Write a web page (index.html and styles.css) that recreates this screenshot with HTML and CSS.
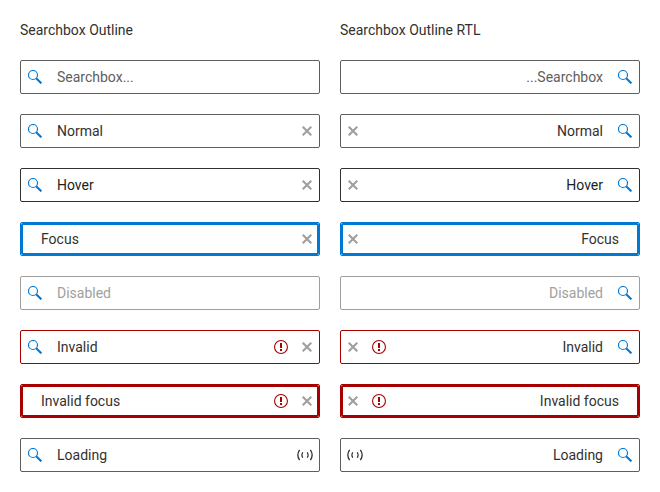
FILE: index.html
```
<!DOCTYPE html>
<html lang="en">
<head>
<meta charset="utf-8">
<title>Searchbox Outline</title>
<link rel="stylesheet" href="styles.css">
</head>
<body>
<svg class="defs" aria-hidden="true">
  <symbol id="search" viewBox="0 0 14 14"><circle cx="5" cy="5" r="4.5" fill="none" stroke="currentColor" stroke-width="1.15"/><path d="M8.2 8.2 13.4 13.4" fill="none" stroke="currentColor" stroke-width="2.1"/></symbol>
  <symbol id="clear" viewBox="0 0 10 10"><path d="M.7.7 9.3 9.3M9.3.7.7 9.3" fill="none" stroke="currentColor" stroke-width="2.1"/></symbol>
  <symbol id="error" viewBox="0 0 14 14"><circle cx="7" cy="7" r="6.45" fill="none" stroke="currentColor" stroke-width="1.1"/><path d="M6 3h2v5H6zM6 9h2v2H6z" fill="currentColor"/></symbol>
  <symbol id="loading" viewBox="0 0 16 12"><path d="M2.6.8Q-.9 6 2.6 11.2M13.4.8Q16.9 6 13.4 11.2" fill="none" stroke="currentColor" stroke-width="1.3"/><path d="M5.8 3.2Q3.9 6 5.8 8.8M10.2 3.2Q12.1 6 10.2 8.8" fill="none" stroke="currentColor" stroke-width="1.1"/></symbol>
</svg>
<main class="page">
  <section class="column">
    <h2>Searchbox Outline</h2>
    <div class="box placeholder"><svg class="search"><use href="#search"/></svg><span class="text">Searchbox...</span></div>
    <div class="box"><svg class="search"><use href="#search"/></svg><span class="text">Normal</span><svg class="clear"><use href="#clear"/></svg></div>
    <div class="box hover"><svg class="search"><use href="#search"/></svg><span class="text">Hover</span><svg class="clear"><use href="#clear"/></svg></div>
    <div class="box focus"><span class="text">Focus</span><svg class="clear"><use href="#clear"/></svg></div>
    <div class="box disabled"><svg class="search"><use href="#search"/></svg><span class="text">Disabled</span></div>
    <div class="box invalid"><svg class="search"><use href="#search"/></svg><span class="text">Invalid</span><svg class="error"><use href="#error"/></svg><svg class="clear"><use href="#clear"/></svg></div>
    <div class="box invalid focus"><span class="text">Invalid focus</span><svg class="error"><use href="#error"/></svg><svg class="clear"><use href="#clear"/></svg></div>
    <div class="box"><svg class="search"><use href="#search"/></svg><span class="text">Loading</span><svg class="loading"><use href="#loading"/></svg></div>
  </section>
  <section class="column rtl">
    <h2>Searchbox Outline RTL</h2>
    <div class="box placeholder" dir="rtl"><svg class="search"><use href="#search"/></svg><span class="text">Searchbox...</span></div>
    <div class="box" dir="rtl"><svg class="search"><use href="#search"/></svg><span class="text">Normal</span><svg class="clear"><use href="#clear"/></svg></div>
    <div class="box hover" dir="rtl"><svg class="search"><use href="#search"/></svg><span class="text">Hover</span><svg class="clear"><use href="#clear"/></svg></div>
    <div class="box focus" dir="rtl"><span class="text">Focus</span><svg class="clear"><use href="#clear"/></svg></div>
    <div class="box disabled" dir="rtl"><svg class="search"><use href="#search"/></svg><span class="text">Disabled</span></div>
    <div class="box invalid" dir="rtl"><svg class="search"><use href="#search"/></svg><span class="text">Invalid</span><svg class="error"><use href="#error"/></svg><svg class="clear"><use href="#clear"/></svg></div>
    <div class="box invalid focus" dir="rtl"><span class="text">Invalid focus</span><svg class="error"><use href="#error"/></svg><svg class="clear"><use href="#clear"/></svg></div>
    <div class="box" dir="rtl"><svg class="search"><use href="#search"/></svg><span class="text">Loading</span><svg class="loading"><use href="#loading"/></svg></div>
  </section>
</main>
</body>
</html>
```

FILE: styles.css
```
* { box-sizing: border-box; }
body {
  margin: 0;
  background: #fff;
  color: #323130;
  font: 14px/20px Roboto, sans-serif;
}
.defs { display: none; }
.page {
  display: grid;
  grid-template-columns: 300px 300px;
  gap: 20px;
  padding: 20px;
}
.column {
  display: grid;
  grid-auto-rows: 34px;
  grid-template-rows: 20px;
  gap: 20px;
}
h2 { margin: 0; font: inherit; }
.box {
  position: relative;
  display: flex;
  align-items: center;
  border: 1px solid #605e5c;
  border-radius: 2px;
  padding-inline: 7px 7px;
}
.box svg { display: block; flex: none; }
.text { flex: 1; margin-inline-start: 13px; }
.search + .text { margin-inline-start: 15px; }
.search { width: 14px; height: 14px; color: #0078d4; }
.clear { width: 10px; height: 10px; color: #a19f9d; }
.error { width: 14px; height: 14px; margin-inline-end: 14px; color: #a80000; }
.loading { width: 16px; height: 12px; margin-inline-end: -1px; }
.placeholder .text { color: #605e5c; }
.hover { border-color: #323130; }
.hover .text { color: #201f1e; }
.focus { border-color: #0078d4; }
.focus::after {
  content: "";
  position: absolute;
  inset: 0;
  border: 2px solid #0078d4;
  border-radius: 2px;
  pointer-events: none;
}
.disabled { border-color: #a19f9d; }
.disabled .text { color: #a19f9d; }
.invalid, .invalid.focus::after { border-color: #a80000; }
```
